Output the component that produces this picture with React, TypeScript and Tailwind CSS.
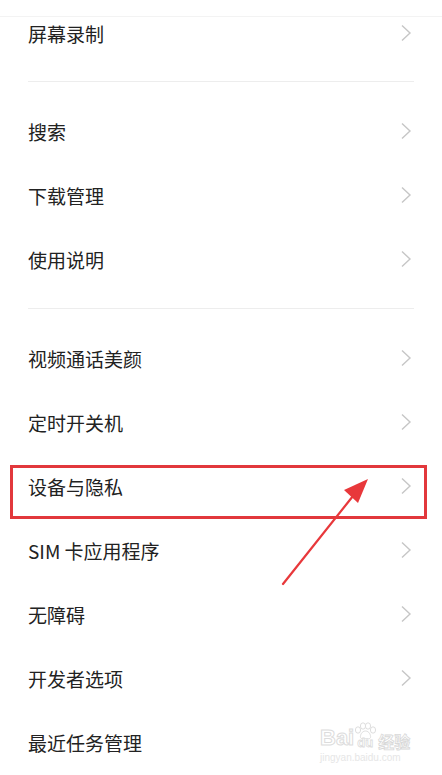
const font = { fontFamily: '"Noto Sans CJK SC", "Noto Sans", sans-serif' };

const Chevron = () => (
  <svg width="12" height="18" viewBox="0 0 12 18" fill="none">
    <path d="M2 1.5 L10 9 L2 16.5" stroke="#c6c6c6" strokeWidth="1.4" strokeLinejoin="miter" />
  </svg>
);

const Row = ({
  label,
  className = "h-16",
  chevron = true,
}: {
  label: string;
  className?: string;
  chevron?: boolean;
}) => (
  <div className={`flex items-center justify-between pl-[28px] pr-[30px] ${className}`}>
    <span className="text-[19px] text-[#222] leading-none">{label}</span>
    {chevron && <Chevron />}
  </div>
);

const groupTwo = ["搜索", "下载管理", "使用说明"];
const groupThree = ["视频通话美颜", "定时开关机", "设备与隐私", "SIM 卡应用程序", "无障碍", "开发者选项", "最近任务管理"];

const Paw = () => (
  <svg width="24" height="18" viewBox="0 0 24 18" fill="white" stroke="#dedede" strokeWidth="1">
    <ellipse cx="5" cy="8" rx="2.6" ry="3.2" />
    <ellipse cx="10" cy="4" rx="2.6" ry="3.2" />
    <ellipse cx="15" cy="4" rx="2.6" ry="3.2" />
    <ellipse cx="20" cy="8" rx="2.6" ry="3.2" />
    <path d="M12.5 9 C9 9 7 13 7.5 15.5 C8 17.5 11 16.5 12.5 16.5 C14 16.5 17 17.5 17.5 15.5 C18 13 16 9 12.5 9 Z" />
  </svg>
);

export default function App() {
  return (
    <div className="relative w-[442px] h-[775px] bg-white overflow-hidden" style={font}>
      <div className="h-[17px] border-b border-[#f3f3f3]" />
      <Row label="屏幕录制" className="h-[32px]" />
      <div className="h-[32px]" />
      <div className="mx-[28px] border-t border-[#ededed]" />
      <div className="pt-[17px] pb-[17px]">
        {groupTwo.map((l) => (
          <Row key={l} label={l} />
        ))}
      </div>
      <div className="mx-[28px] border-t border-[#ededed]" />
      <div className="pt-[17px]">
        {groupThree.map((l, i) => (
          <Row key={l} label={l} chevron={i !== groupThree.length - 1} />
        ))}
      </div>

      {/* annotation box */}
      <div className="absolute left-[10px] top-[465px] w-[417px] h-[54px] border-[3px] border-[#e2383c]" />

      {/* annotation arrow */}
      <svg className="absolute left-0 top-0" width="442" height="775" viewBox="0 0 442 775">
        <path d="M283 584 L353 496" stroke="#e8383b" strokeWidth="2.2" strokeLinecap="round" />
        <path d="M368 479 L344 490 L358 503 Z" fill="#e8383b" />
      </svg>

      {/* watermark */}
      <div className="absolute left-[320px] top-[722px] flex flex-col items-start leading-none">
        <div className="flex items-end">
          <span className="text-[22px] font-bold text-white [-webkit-text-stroke:1px_#dcdcdc]" style={{ fontFamily: '"Liberation Sans", sans-serif' }}>
            Bai
          </span>
          <div className="flex flex-col items-center -ml-[1px]">
            <Paw />
            <span className="text-[13px] font-bold text-white [-webkit-text-stroke:0.8px_#dcdcdc] -mt-[4px]" style={{ fontFamily: '"Liberation Sans", sans-serif' }}>
              du
            </span>
          </div>
          <span className="text-[16px] font-bold text-white [-webkit-text-stroke:0.8px_#d8d8d8] ml-[1px]">经验</span>
        </div>
        <span className="text-[10px] text-[#e6e6e6] mt-[4px]" style={{ fontFamily: '"Liberation Sans", sans-serif' }}>
          jingyan.baidu.com
        </span>
      </div>
    </div>
  );
}
